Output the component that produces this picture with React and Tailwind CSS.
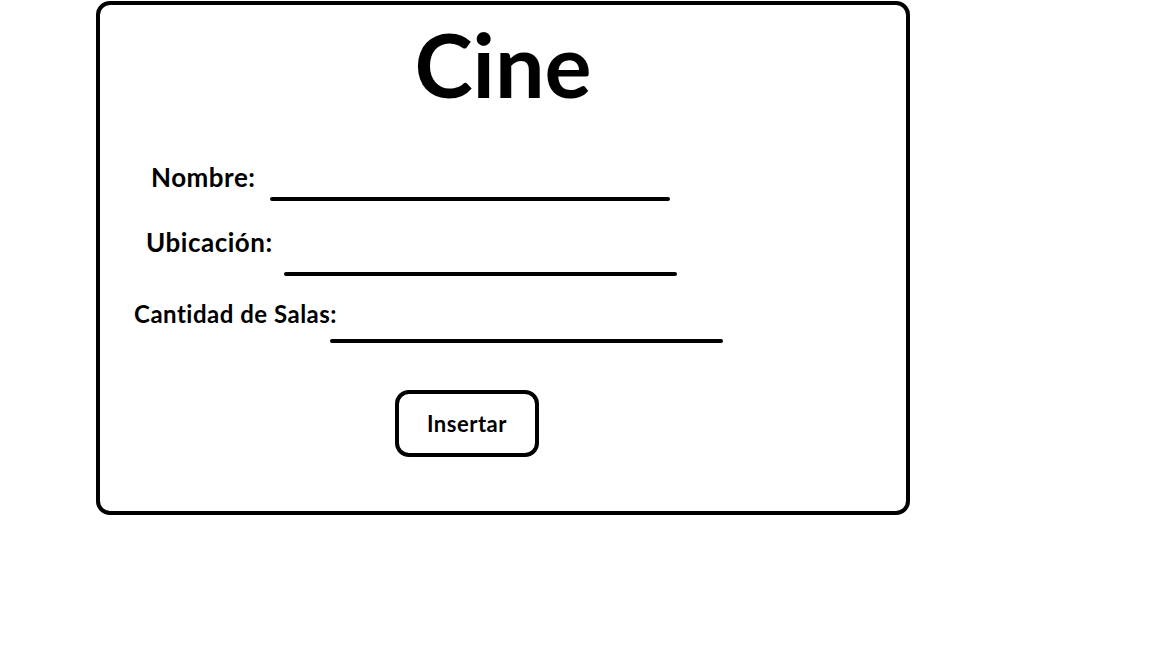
import React from 'react';

// Wireframe-style form card for "Cine"
const fields = [
  { label: 'Nombre:', labelMl: 'ml-[51px]', labelW: 'w-[119px]', size: 'text-[26px]', rowMt: 'mt-[56px]', lineMt: 'mt-[33px]', lineW: 'w-[400px]' },
  { label: 'Ubicación:', labelMl: 'ml-[46px]', labelW: 'w-[138px]', size: 'text-[26px]', rowMt: 'mt-[28px]', lineMt: 'mt-[43px]', lineW: 'w-[393px]' },
  { label: 'Cantidad de Salas:', labelMl: 'ml-[34px]', labelW: 'w-[196px]', size: 'text-[24px]', rowMt: 'mt-[26px]', lineMt: 'mt-[37px]', lineW: 'w-[393px]' },
];

const App = () => {
  return (
    <div className="w-[1152px] h-[648px] bg-white font-['Lato','Liberation_Sans',sans-serif] text-black">
      <div className="ml-[96px] mt-[1px] w-[814px] h-[514px] border-4 border-black rounded-[14px] pt-[15px]">
        {/* Title */}
        <h1 className="text-center text-[88px] leading-none font-bold">Cine</h1>

        {/* Fields */}
        {fields.map((f, i) => (
          <div key={i} className={`flex items-start ${f.rowMt}`}>
            <div className={`${f.labelMl} ${f.labelW} shrink-0`}>
              <span className={`${f.size} leading-none font-bold tracking-[0.5px] whitespace-nowrap`}>{f.label}</span>
            </div>
            <div className={`${f.lineMt} ${f.lineW} h-[4px] bg-black rounded-full`} />
          </div>
        ))}

        {/* Button */}
        <button className="mt-[47px] ml-[295px] w-[144px] h-[67px] border-4 border-black rounded-[14px] bg-white flex items-center justify-center">
          <span className="text-[22px] leading-none font-bold tracking-[0.5px]">Insertar</span>
        </button>
      </div>
    </div>
  );
};

export default App;
